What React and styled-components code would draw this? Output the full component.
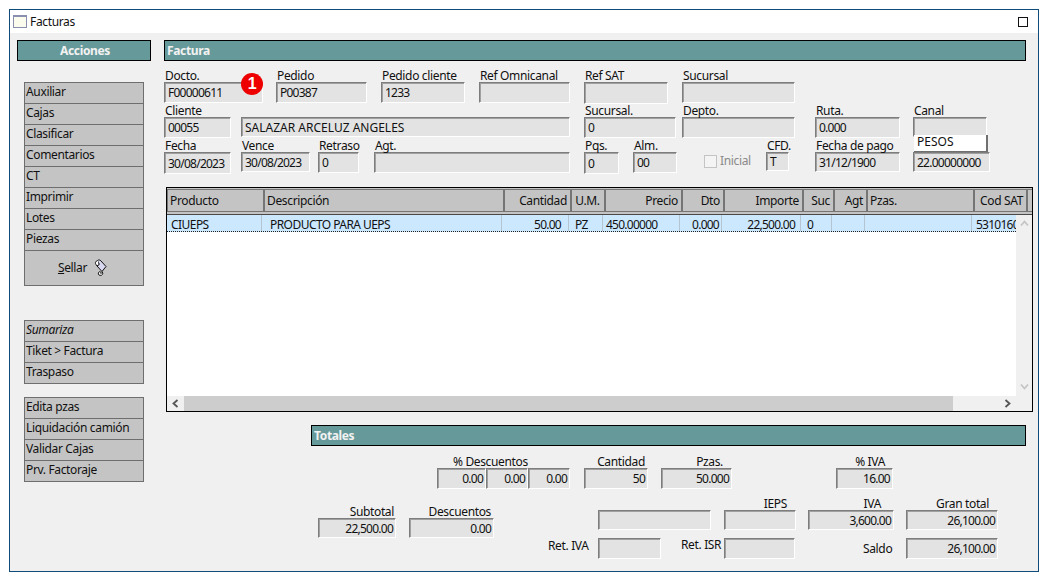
import styled, { createGlobalStyle } from "styled-components";

const GlobalStyle = createGlobalStyle`
  html, body {
    margin: 0;
    padding: 0;
    background: #ffffff;
    font-family: "Noto Sans", "Liberation Sans", sans-serif;
    font-size: 12px;
    letter-spacing: -0.35px;
    color: #111;
  }
`;

const sideGroups = [
  ["Auxiliar", "Cajas", "Clasificar", "Comentarios", "CT", "Imprimir", "Lotes", "Piezas"],
  ["Sumariza", "Tiket > Factura", "Traspaso"],
  ["Edita pzas", "Liquidación camión", "Validar Cajas", "Prv. Factoraje"],
];

// w = header cell width, cw = data cell width
const columns = [
  { title: "Producto", w: 97, cw: 95, value: "CIUEPS", pl: 4 },
  { title: "Descripción", w: 240, cw: 240, value: "PRODUCTO PARA UEPS", pl: 8 },
  { title: "Cantidad", w: 67, cw: 67, value: "50.00", right: true, valueRight: true, pr: 7 },
  { title: "U.M.", w: 34, cw: 34, value: "PZ", center: true, pl: 6 },
  { title: "Precio", w: 77, cw: 77, value: "450.00000", right: true, pl: 3 },
  { title: "Dto", w: 42, cw: 42, value: "0.000", right: true, valueRight: true, pr: 2 },
  { title: "Importe", w: 79, cw: 79, value: "22,500.00", right: true, valueRight: true, pr: 5 },
  { title: "Suc", w: 31, cw: 31, value: "0", right: true, pl: 6 },
  { title: "Agt", w: 33, cw: 33, value: "", right: true },
  { title: "Pzas.", w: 107, cw: 107, value: "" },
  { title: "Cod SAT", w: 53, cw: 44, value: "5310160", right: true, pl: 4, clip: true },
  { title: "", w: 5, cw: 0, value: "" },
];

const isNumeric = (value) => /\d{2}|^\d/.test(value);

const Page = styled.div`
  width: 1047px;
  height: 582px;
  padding: 9px 0 0 9px;
  box-sizing: border-box;
`;

const Window = styled.div`
  width: 1030px;
  height: 563px;
  box-sizing: border-box;
  border: 1px solid #0f4c7c;
  background: #f0f0f0;
  display: flex;
  flex-direction: column;
`;

const TitleBar = styled.div`
  height: 23px;
  flex: none;
  background: #ffffff;
  display: flex;
  align-items: center;
  padding: 0 10px 0 3px;
`;

const TitleIcon = styled.span`
  width: 12px;
  height: 10px;
  border: 1px solid #8a8fb0;
  border-top: 2px solid #8a8fb0;
  background: #fbfbee;
  margin-right: 3px;
`;

const TitleText = styled.span`
  flex: 1;
  line-height: 16px;
`;

const MaxBox = styled.span`
  width: 8px;
  height: 8px;
  border: 1px solid #111;
`;

const Body = styled.div`
  flex: 1;
  display: flex;
  padding-top: 7px;
  padding-left: 7px;
`;

const Sidebar = styled.div`
  width: 134px;
  flex: none;
  margin-right: 13px;
`;

const SectionBar = styled.div`
  box-sizing: border-box;
  height: 21px;
  border: 1px solid #000;
  background: #669999;
  color: #f2f2f2;
  font-weight: 700;
  line-height: 19px;
  padding-left: 2px;
  text-align: ${(p) => (p.$center ? "center" : "left")};
  width: ${(p) => p.$w || 862}px;
  margin-left: ${(p) => p.$ml || 0}px;
`;

const SideGroup = styled.div`
  width: 120px;
  margin-left: 7px;
  margin-top: ${(p) => p.$mt}px;
  box-sizing: border-box;
  border: 1px solid #6e6e6e;
  border-top: none;
`;

const SideItem = styled.div`
  box-sizing: border-box;
  height: 21px;
  border-top: 1px solid #6e6e6e;
  background: #c4c4c4;
  line-height: 18px;
  padding-left: 1px;
  font-style: ${(p) => (p.$italic ? "italic" : "normal")};
`;

const SealItem = styled.div`
  box-sizing: border-box;
  height: 35px;
  border-top: 1px solid #6e6e6e;
  background: #c4c4c4;
  display: flex;
  align-items: center;
  justify-content: center;
  gap: 7px;
  padding: 0 3px 1px 0;
  line-height: 15px;
`;

const Main = styled.div`
  width: 870px;
  flex: none;
`;

const FieldRow = styled.div`
  display: flex;
  align-items: flex-start;
  height: ${(p) => p.$h || 35}px;
  margin-top: ${(p) => p.$mt || 0}px;
`;

const FieldBox = styled.div`
  width: ${(p) => p.$w}px;
  flex: none;
  margin-left: ${(p) => p.$ml || 0}px;
  position: relative;
`;

const Label = styled.div`
  height: 14px;
  line-height: 16px;
  white-space: nowrap;
  text-align: ${(p) => p.$align || "left"};
  padding-left: ${(p) => p.$pl ?? 1}px;
  padding-right: ${(p) => p.$pr || 0}px;
`;

const Sunken = styled.div`
  box-sizing: border-box;
  ${(p) => p.$w && `width: ${p.$w}px; flex: none;`}
  height: ${(p) => p.$h || 21}px;
  background: #e3e3e3;
  border-style: solid;
  border-width: 1px;
  border-color: #7d7d7d #ffffff #ffffff #7d7d7d;
  box-shadow: inset 1px 1px 0 #a0a0a0;
  line-height: ${(p) => (p.$h || 21) - 1}px;
  letter-spacing: ${(p) => (p.$num ? "-0.75px" : "0")};
  padding: 0 ${(p) => (p.$right ? 2 : 0)}px 0 ${(p) => (p.$right ? 0 : 3)}px;
  text-align: ${(p) => (p.$right ? "right" : "left")};
  white-space: nowrap;
  overflow: hidden;
`;

const Badge = styled.span`
  position: absolute;
  left: 77px;
  top: 5px;
  width: 22px;
  height: 22px;
  border-radius: 50%;
  background: #ee0000;
  color: #fff;
  font-weight: 700;
  font-size: 16px;
  line-height: 21px;
  text-align: center;
  font-family: "Liberation Sans", sans-serif;
`;

const Dropdown = styled.div`
  position: absolute;
  left: 1px;
  top: 32px;
  width: 74px;
  height: 17px;
  box-sizing: border-box;
  background: #fff;
  border-right: 2px solid #707070;
  border-bottom: 1px solid #707070;
  line-height: 14px;
  letter-spacing: 0;
  padding-left: 3px;
  z-index: 2;
`;

const CheckWrap = styled.div`
  display: flex;
  align-items: center;
  gap: 3px;
  margin-left: 27px;
  margin-top: 16px;
  width: 50px;
  flex: none;
  color: #8a8a8a;
  line-height: 14px;
`;

const CheckBox = styled.span`
  width: 11px;
  height: 11px;
  border: 1px solid #c4c4c4;
  background: #f4f4f4;
`;

const Grid = styled.div`
  box-sizing: border-box;
  width: 867px;
  height: 225px;
  margin: 13px 0 13px 2px;
  border: 1px solid #000;
  background: #fff;
  display: flex;
  flex-direction: column;
`;

const GridHeader = styled.div`
  display: flex;
  flex: none;
  height: 27px;
  box-sizing: border-box;
  padding-top: 1px;
  background: #c4c4c4;
  border-bottom: 1px solid #4a4a4a;
  overflow: hidden;
`;

const HeaderCell = styled.div`
  box-sizing: border-box;
  width: ${(p) => p.$w}px;
  flex: none;
  height: 23px;
  border: 1px solid #757575;
  line-height: 21px;
  padding: 0 3px 0 2px;
  text-align: ${(p) => (p.$right ? "right" : p.$center ? "center" : "left")};
  white-space: nowrap;
  overflow: hidden;
`;

const GridBody = styled.div`
  flex: 1;
  display: flex;
  min-height: 0;
`;

const RowsColumn = styled.div`
  flex: 1;
  min-width: 0;
  display: flex;
  flex-direction: column;
`;

const Rows = styled.div`
  flex: 1;
`;

const DataRow = styled.div`
  display: flex;
  height: 17px;
  box-sizing: border-box;
  background: #cce8ff;
  border-bottom: 1px dotted #222;
`;

const DataCell = styled.div`
  box-sizing: border-box;
  width: ${(p) => p.$w}px;
  flex: none;
  border-right: 1px solid #b4c4d0;
  line-height: 20px;
  letter-spacing: ${(p) => (p.$num ? "-0.75px" : "-0.55px")};
  white-space: nowrap;
  overflow: ${(p) => (p.$clip ? "hidden" : "visible")};
  padding: 0 ${(p) => p.$pr || 0}px 0 ${(p) => p.$pl || 0}px;
  text-align: ${(p) => (p.$right ? "right" : "left")};
  &:last-child {
    border-right: none;
  }
`;

const HScroll = styled.div`
  height: 15px;
  flex: none;
  background: #f0f0f0;
  display: flex;
  align-items: center;
`;

const ScrollEnd = styled.span`
  width: 17px;
  flex: none;
  display: flex;
  justify-content: center;
  align-items: center;
`;

const ScrollTrack = styled.span`
  flex: 1;
  align-self: stretch;
  display: flex;
`;

const ScrollThumb = styled.span`
  width: 769px;
  background: #cdcdcd;
`;

const VScroll = styled.div`
  width: 16px;
  flex: none;
  display: flex;
  flex-direction: column;
  align-items: center;
  justify-content: space-between;
  background: #f0f0f0;
  padding: 4px 0 20px;
  box-sizing: border-box;
`;

const Totals = styled.div`
  margin-left: 147px;
`;

const TotalsBottom = styled.div`
  display: flex;
  align-items: flex-start;
`;

const TotalsLeft = styled.div`
  display: flex;
  margin-top: 15px;
`;

const TotalsRight = styled.div`
  display: flex;
  flex-direction: column;
  gap: 8px;
  margin-left: 54px;
  margin-top: 7px;
`;

const TotalsLine = styled.div`
  display: flex;
  align-items: flex-start;
`;

const InlineLabel = styled.div`
  width: ${(p) => p.$w}px;
  flex: none;
  margin-left: ${(p) => p.$ml || 0}px;
  margin-top: ${(p) => p.$mt || 0}px;
  line-height: 14px;
  white-space: nowrap;
`;

const TripleField = styled.div`
  display: flex;
`;

const SealIcon = () => (
  <svg width="13" height="18" viewBox="0 0 13 18" fill="none">
    <path d="M3.5 1.5 C4.5 0.5 6 0.8 7 2 L12 7.5 L8 12.5 L3 7 L5 5.5 Z" fill="#d8d8f0" stroke="#111" strokeWidth="1" />
    <path d="M3.5 1.5 C1.5 2.2 0.8 4.2 2 5.5 L3 7 L5.2 5.4 L4.5 3.4" fill="#ffffff" stroke="#111" strokeWidth="1" />
    <path d="M8 12.5 L8.8 14.2 C9 16 6.5 17.2 5 16 C3.8 15 4.2 13 5.8 12.6 L7.6 14 L6.4 14.8" fill="#ffffff" stroke="#111" strokeWidth="1" />
  </svg>
);

const Chevron = ({ dir }) => {
  const rotate = { left: 180, right: 0, up: -90, down: 90 }[dir];
  const muted = dir === "up" || dir === "down";
  return (
    <svg width="9" height="9" viewBox="0 0 9 9" style={{ transform: `rotate(${rotate}deg)` }}>
      <path d="M2.5 1 L6.5 4.5 L2.5 8" fill="none" stroke={muted ? "#c4c4c4" : "#555"} strokeWidth="1.8" />
    </svg>
  );
};

const Field = ({ label, w, ml, h, right, value = "", labelAlign, labelPr, labelPl, children }) => (
  <FieldBox $w={w} $ml={ml}>
    {label !== undefined && (
      <Label $align={labelAlign} $pr={labelPr} $pl={labelPl}>{label}</Label>
    )}
    <Sunken $h={h} $right={right} $num={isNumeric(value)}>{value}</Sunken>
    {children}
  </FieldBox>
);

export default function App() {
  return (
    <Page>
      <GlobalStyle />
      <Window>
        <TitleBar>
          <TitleIcon />
          <TitleText>Facturas</TitleText>
          <MaxBox />
        </TitleBar>
        <Body>
          <Sidebar>
            <SectionBar $center $w={134}>Acciones</SectionBar>
            <SideGroup $mt={21}>
              {sideGroups[0].map((item) => (
                <SideItem key={item}>{item}</SideItem>
              ))}
              <SealItem>
                <span><u>S</u>ellar</span>
                <SealIcon />
              </SealItem>
            </SideGroup>
            <SideGroup $mt={34}>
              {sideGroups[1].map((item) => (
                <SideItem key={item} $italic={item === "Sumariza"}>{item}</SideItem>
              ))}
            </SideGroup>
            <SideGroup $mt={13}>
              {sideGroups[2].map((item) => (
                <SideItem key={item}>{item}</SideItem>
              ))}
            </SideGroup>
          </Sidebar>
          <Main>
            <SectionBar>Factura</SectionBar>
            <FieldRow $mt={7}>
              <Field label="Docto." w={99} value="F00000611">
                <Badge>1</Badge>
              </Field>
              <Field label="Pedido" w={91} ml={13} value="P00387" />
              <Field label="Pedido cliente" w={84} ml={14} value="1233" />
              <Field label="Ref Omnicanal" w={91} ml={14} />
              <Field label="Ref SAT" w={84} ml={14} h={22} />
              <Field label="Sucursal" w={113} ml={14} />
            </FieldRow>
            <FieldRow>
              <Field label="Cliente" w={67} value="00055" />
              <Field label="" w={329} ml={10} h={20} value="SALAZAR ARCELUZ ANGELES" />
              <Field label="Sucursal." w={92} ml={14} value="0" />
              <Field label="Depto." w={113} ml={6} />
              <Field label="Ruta." w={85} ml={20} value="0.000" />
              <Field label="Canal" w={74} ml={13} h={20}>
                <Dropdown>PESOS</Dropdown>
              </Field>
            </FieldRow>
            <FieldRow $h={36}>
              <Field label="Fecha" w={67} h={22} value="30/08/2023" />
              <Field label="Vence" w={69} ml={10} h={20} value="30/08/2023" />
              <Field label="Retraso" w={41} ml={8} value="0" />
              <Field label="Agt." w={196} ml={15} />
              <Field label="Pqs." w={35} ml={14} h={22} value="0" />
              <Field label="Alm." w={44} ml={14} value="00" />
              <CheckWrap>
                <CheckBox />
                Inicial
              </CheckWrap>
              <Field label="CFD." w={23} ml={12} h={19} value="T" />
              <Field label="Fecha de pago" w={85} ml={26} h={20} value="31/12/1900" />
              <Field label="" w={77} ml={13} h={20} value="22.00000000" />
            </FieldRow>
            <Grid>
              <GridHeader>
                {columns.map((col) => (
                  <HeaderCell key={col.title} $w={col.w} $right={col.right} $center={col.center}>
                    {col.title}
                  </HeaderCell>
                ))}
              </GridHeader>
              <GridBody>
                <RowsColumn>
                  <Rows>
                    <DataRow>
                      {columns.filter((col) => col.cw > 0).map((col) => (
                        <DataCell
                          key={col.title}
                          $w={col.cw}
                          $pl={col.pl}
                          $pr={col.pr}
                          $num={isNumeric(col.value)}
                          $right={col.valueRight}
                          $clip={col.clip}
                        >
                          {col.value}
                        </DataCell>
                      ))}
                    </DataRow>
                  </Rows>
                  <HScroll>
                    <ScrollEnd><Chevron dir="left" /></ScrollEnd>
                    <ScrollTrack><ScrollThumb /></ScrollTrack>
                    <ScrollEnd><Chevron dir="right" /></ScrollEnd>
                  </HScroll>
                </RowsColumn>
                <VScroll>
                  <Chevron dir="up" />
                  <Chevron dir="down" />
                </VScroll>
              </GridBody>
            </Grid>
            <Totals>
              <SectionBar $w={715}>Totales</SectionBar>
              <FieldRow $mt={8}>
                <FieldBox $w={133} $ml={126}>
                  <Label $pl={16}>% Descuentos</Label>
                  <TripleField>
                    <Sunken $w={49} $right $num>0.00</Sunken>
                    <Sunken $w={42} $right $num>0.00</Sunken>
                    <Sunken $w={42} $right $num>0.00</Sunken>
                  </TripleField>
                </FieldBox>
                <Field label="Cantidad" w={64} ml={14} right labelAlign="right" labelPr={3} value="50" />
                <Field label="Pzas." w={71} ml={13} right labelAlign="right" labelPr={9} value="50.000" />
                <Field label="% IVA" w={57} ml={104} right labelAlign="right" labelPr={8} value="16.00" />
              </FieldRow>
              <TotalsBottom>
                <TotalsLeft>
                  <Field label="Subtotal" w={78} ml={7} h={20} right labelAlign="right" labelPr={2} value="22,500.00" />
                  <Field label="Descuentos" w={85} ml={13} h={20} right labelAlign="right" labelPr={3} value="0.00" />
                </TotalsLeft>
                <TotalsRight>
                  <TotalsLine>
                    <Field label="" w={113} ml={50} h={20} />
                    <Field label="IEPS" w={72} ml={13} h={20} labelAlign="right" labelPr={9} />
                    <Field label="IVA" w={86} ml={12} h={20} right labelAlign="right" labelPr={13} value="3,600.00" />
                    <Field label="Gran total" w={92} ml={12} h={20} right labelAlign="right" labelPr={9} value="26,100.00" />
                  </TotalsLine>
                  <TotalsLine>
                    <InlineLabel $w={42} $mt={1}>Ret. IVA</InlineLabel>
                    <Field w={63} ml={8} />
                    <InlineLabel $w={40} $ml={20}>Ret. ISR</InlineLabel>
                    <Field w={71} ml={3} />
                    <InlineLabel $w={29} $ml={68} $mt={4}>Saldo</InlineLabel>
                    <Field w={92} ml={14} right value="26,100.00" />
                  </TotalsLine>
                </TotalsRight>
              </TotalsBottom>
            </Totals>
          </Main>
        </Body>
      </Window>
    </Page>
  );
}
